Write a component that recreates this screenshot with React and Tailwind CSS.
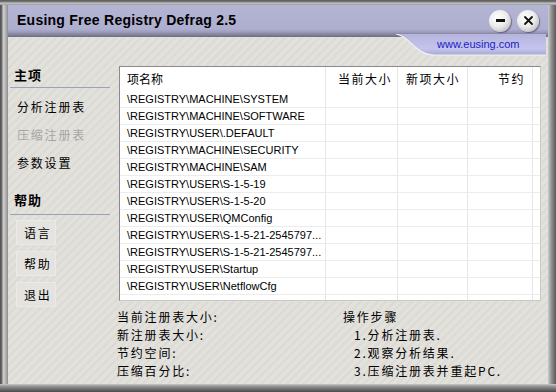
import React from "react";

const cjk = { fontFamily: '"Noto Sans CJK SC", "Liberation Sans", sans-serif' };
const lat = { fontFamily: '"Liberation Sans", Arial, sans-serif' };

const rows = [
  "\\REGISTRY\\MACHINE\\SYSTEM",
  "\\REGISTRY\\MACHINE\\SOFTWARE",
  "\\REGISTRY\\USER\\.DEFAULT",
  "\\REGISTRY\\MACHINE\\SECURITY",
  "\\REGISTRY\\MACHINE\\SAM",
  "\\REGISTRY\\USER\\S-1-5-19",
  "\\REGISTRY\\USER\\S-1-5-20",
  "\\REGISTRY\\USER\\QMConfig",
  "\\REGISTRY\\USER\\S-1-5-21-2545797...",
  "\\REGISTRY\\USER\\S-1-5-21-2545797...",
  "\\REGISTRY\\USER\\Startup",
  "\\REGISTRY\\USER\\NetflowCfg",
];

function RoundBtn({ children }) {
  return (
    <div className="w-[22px] h-[22px] rounded-full flex items-center justify-center bg-[radial-gradient(circle_at_40%_35%,#ffffff_0%,#ececec_45%,#b8b8b8_85%,#7a7a7a_100%)] shadow-[1px_1px_1px_rgba(60,60,90,0.6)]">
      {children}
    </div>
  );
}

export default function App() {
  return (
    <div className="relative w-[556px] h-[392px] flex flex-col bg-[#6e6e6e] overflow-hidden">
      {/* top border */}
      <div className="h-[5px] bg-[linear-gradient(to_bottom,#5a5a5a_0px,#7a7a7a_2px,#c8c8c8_3px,#9a9a9a_5px)]" />
      <div className="flex-1 flex min-h-0">
        {/* left border */}
        <div className="w-[8px] bg-[linear-gradient(to_right,#4e4e4e_0px,#707070_2px,#cfcfcf_3px,#bdbdbd_5px,#8c8c8c_8px)]" />
        <div className="flex-1 flex flex-col min-w-0">
          {/* title bar */}
          <div className="h-[32px] flex items-center justify-between pl-[9px] pr-[9px] pb-[3px] bg-[linear-gradient(to_bottom,#b4b4d4_0px,#aeaece_24px,#9c9cbc_27px,#7e7e98_30px,#6c6c82_32px)]">
            <div className="text-[14px] font-bold text-black tracking-[0.25px] leading-none pt-[1px]" style={lat}>
              Eusing Free Registry Defrag 2.5
            </div>
            <div className="flex items-center gap-[6px] pt-[2px]">
              <RoundBtn>
                <div className="w-[9px] h-[3px] bg-[#111]" />
              </RoundBtn>
              <RoundBtn>
                <svg width="11" height="11" viewBox="0 0 11 11">
                  <path d="M2 2 L9 9 M9 2 L2 9" stroke="#111" strokeWidth="1.8" strokeLinecap="round" />
                </svg>
              </RoundBtn>
            </div>
          </div>
          {/* body */}
          <div className="flex-1 flex bg-[#e0ded9] bg-[repeating-linear-gradient(135deg,#e3e1dc_0px,#e3e1dc_3px,#dbd9d4_4px,#e0ded9_6px)]">
            {/* sidebar */}
            <div className="w-[109px] flex flex-col">
              <div className="mt-[28px] h-[20px] leading-[20px] pl-[6px] text-[13px] font-bold text-black tracking-[1px]" style={cjk}>
                主项
              </div>
              <div className="mt-[2px] ml-[2px] w-[100px] h-px bg-[#98a4b8]" />
              <div className="mt-[5px] flex flex-col">
                <div className="h-[28px] leading-[28px] pl-[9px] text-[12px] tracking-[1.8px] text-black" style={cjk}>分析注册表</div>
                <div className="h-[28px] leading-[28px] pl-[9px] text-[12px] tracking-[1.8px] text-[#a6a6a6]" style={cjk}>压缩注册表</div>
                <div className="h-[28px] leading-[28px] pl-[9px] text-[12px] tracking-[1.8px] text-black" style={cjk}>参数设置</div>
              </div>
              <div className="mt-[13px] h-[20px] leading-[20px] pl-[6px] text-[13px] font-bold text-black tracking-[1px]" style={cjk}>
                帮助
              </div>
              <div className="mt-[4px] ml-[2px] w-[100px] h-px bg-[#98a4b8]" />
              <div className="mt-[5px] flex flex-col gap-[6px] pl-[8px]">
                {["语言", "帮助", "退出"].map((t) => (
                  <div key={t} className="w-[40px] h-[25px] leading-[23px] pl-[7px] border border-[#ebeae6] bg-[#e4e3df] text-[12px] tracking-[1.8px] text-black" style={cjk}>
                    {t}
                  </div>
                ))}
              </div>
            </div>
            {/* main */}
            <div className="flex-1 flex flex-col">
              <div className="mt-[29px] ml-[2px] w-[422px] h-[235px] bg-white border border-[#8a8a8a] border-r-[#c8c8c8] border-b-[#c8c8c8] flex flex-col overflow-hidden" style={lat}>
                <div className="h-[24px] flex text-[12px] text-black shrink-0" style={cjk}>
                  <div className="w-[206px] pl-[7px] leading-[24px] border-r border-[#e6e6e6]">项名称</div>
                  <div className="w-[72px] pr-[5px] text-right leading-[24px] border-r border-[#e6e6e6] tracking-[1.5px]">当前大小</div>
                  <div className="w-[70px] pr-[7px] text-right leading-[24px] border-r border-[#e6e6e6] tracking-[1.5px]">新项大小</div>
                  <div className="w-[65px] pr-[7px] text-right leading-[24px] border-r border-[#e6e6e6] tracking-[1.5px]">节约</div>
                  <div className="flex-1" />
                </div>
                {rows.map((r, i) => (
                  <div key={i} className="h-[17px] flex text-[11px] text-black border-b border-[#ececec] shrink-0">
                    <div className="w-[206px] pl-[7px] leading-[16px] border-r border-[#e6e6e6] whitespace-nowrap overflow-hidden">{r}</div>
                    <div className="w-[72px] border-r border-[#e6e6e6]" />
                    <div className="w-[70px] border-r border-[#e6e6e6]" />
                    <div className="w-[65px] border-r border-[#e6e6e6]" />
                    <div className="flex-1" />
                  </div>
                ))}
                <div className="flex-1 flex">
                  <div className="w-[206px] border-r border-[#e6e6e6]" />
                  <div className="w-[72px] border-r border-[#e6e6e6]" />
                  <div className="w-[70px] border-r border-[#e6e6e6]" />
                  <div className="w-[65px] border-r border-[#e6e6e6]" />
                </div>
              </div>
              <div className="mt-[7px] flex text-[12px] leading-[18px] tracking-[1.8px] text-black" style={cjk}>
                <div className="w-[226px] flex flex-col">
                  <div>当前注册表大小:</div>
                  <div>新注册表大小:</div>
                  <div>节约空间:</div>
                  <div>压缩百分比:</div>
                </div>
                <div className="flex flex-col">
                  <div>操作步骤</div>
                  <div className="pl-[11px]">1.分析注册表.</div>
                  <div className="pl-[11px]">2.观察分析结果.</div>
                  <div className="pl-[11px]">3.压缩注册表并重起PC.</div>
                </div>
              </div>
            </div>
          </div>
        </div>
        {/* right border */}
        <div className="w-[8px] bg-[linear-gradient(to_right,#cfcfcf_0px,#a8a8a8_2px,#8a8a8a_4px,#5a5a5a_8px)]" />
      </div>
      {/* bottom border */}
      <div className="h-[8px] bg-[linear-gradient(to_bottom,#c8c8c8_0px,#9a9a9a_2px,#707070_5px,#4a4a4a_8px)]" />

      {/* website tab hanging under title bar */}
      <div className="absolute left-[396px] top-[34px] w-[152px] h-[23px]">
        <svg width="152" height="23" viewBox="0 0 152 23" className="absolute inset-0">
          <defs>
            <linearGradient id="tabg" x1="0" y1="0" x2="0" y2="1">
              <stop offset="0" stopColor="#b4b4dc" />
              <stop offset="0.7" stopColor="#c4c4ee" />
              <stop offset="1" stopColor="#a8a8d0" />
            </linearGradient>
          </defs>
          <path d="M0 0 C 14 2, 18 20, 38 21 L 150 21 L 150 0 Z" fill="url(#tabg)" />
          <path d="M0 0 C 14 2, 18 20, 38 21 L 150 21" fill="none" stroke="#f2f2f2" strokeWidth="1.2" />
        </svg>
        <div className="absolute left-[41px] top-[4px] text-[11px] leading-[13px] text-[#1c1cc8]" style={lat}>
          www.eusing.com
        </div>
      </div>
    </div>
  );
}
